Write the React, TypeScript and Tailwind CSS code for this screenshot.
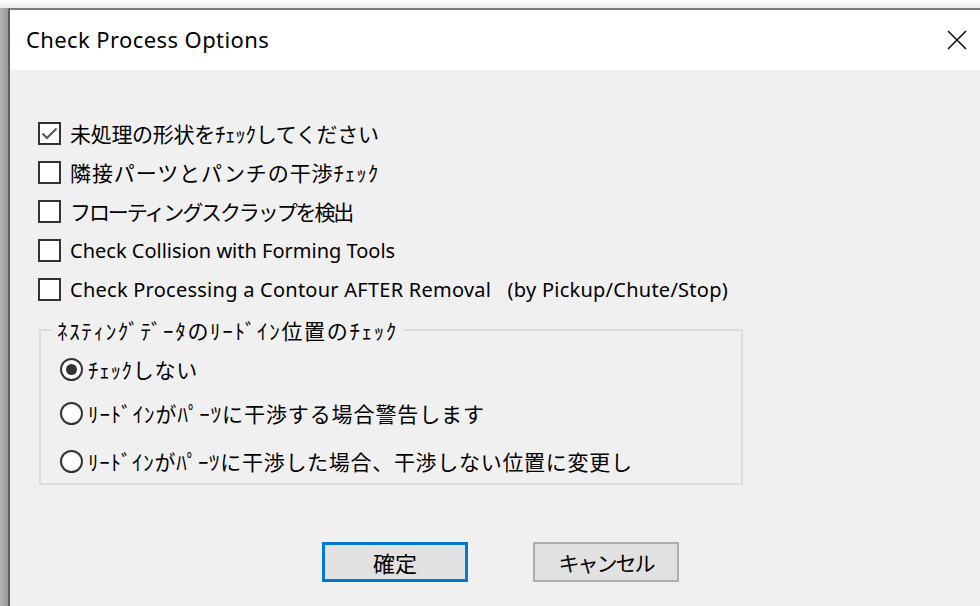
import React, { useState } from 'react';

const JP = '"Noto Sans CJK JP", "Noto Sans", sans-serif';
const EN = '"Noto Sans", "Open Sans", "Noto Sans CJK JP", sans-serif';

type CheckOption = { label: string; jp: boolean; tracking: string };

const checkOptions: CheckOption[] = [
  { label: '未処理の形状をﾁｪｯｸしてください', jp: true, tracking: 'tracking-[-0.3px]' },
  { label: '隣接パーツとパンチの干渉ﾁｪｯｸ', jp: true, tracking: 'tracking-[0.9px]' },
  { label: 'フローティングスクラップを検出', jp: true, tracking: 'tracking-[-2.1px]' },
  { label: 'Check Collision with Forming Tools', jp: false, tracking: 'tracking-[0px]' },
  {
    label: 'Check Processing a Contour AFTER Removal\u00a0\u00a0 (by Pickup/Chute/Stop)',
    jp: false,
    tracking: 'tracking-[0.25px]',
  },
];

const leadInOptions = [
  { label: 'ﾁｪｯｸしない', tracking: 'tracking-[0.7px]', row: 'h-[40px] mt-[7px]' },
  { label: 'ﾘｰﾄﾞｲﾝがﾊﾟｰﾂに干渉する場合警告します', tracking: 'tracking-[0.9px]', row: 'h-[40px] mt-[4px]' },
  {
    label: 'ﾘｰﾄﾞｲﾝがﾊﾟｰﾂに干渉した場合、干渉しない位置に変更し',
    tracking: 'tracking-[0.7px]',
    row: 'h-[40px] mt-[8px]',
  },
];

function CheckBox({ checked }: { checked: boolean }) {
  return (
    <span className="w-[23px] h-[23px] shrink-0 border-2 border-[#333333] bg-white flex items-center justify-center">
      {checked ? (
        <svg width="19" height="19" viewBox="0 0 19 19">
          <polyline points="2.5,9.5 7,14 16.5,4.5" fill="none" stroke="#555555" strokeWidth="2" />
        </svg>
      ) : null}
    </span>
  );
}

function Radio({ checked }: { checked: boolean }) {
  return (
    <span className="w-[23px] h-[23px] shrink-0 rounded-full border-2 border-[#333333] bg-white flex items-center justify-center">
      {checked ? <span className="w-[11px] h-[11px] rounded-full bg-[#333333]" /> : null}
    </span>
  );
}

export default function App() {
  const [checks, setChecks] = useState([true, false, false, false, false]);
  const [leadIn, setLeadIn] = useState(0);

  const toggle = (i: number) => setChecks((prev) => prev.map((v, idx) => (idx === i ? !v : v)));

  return (
    <div className="w-[980px] h-[606px] overflow-hidden bg-white flex flex-col">
      <div className="h-[8px] shrink-0 bg-gradient-to-b from-white to-[#ebebeb]" />
      <div className="flex-1 min-h-0 flex">
        <div className="w-[8px] shrink-0 bg-gradient-to-r from-[#b3b3b3] to-[#979797]" />
        <div className="flex-1 min-w-0 flex flex-col border-l-2 border-t-2 border-l-[#5e5e5e] border-t-[#7a7a7a]">
          {/* title bar */}
          <div className="h-[60px] shrink-0 bg-white flex items-center justify-between pl-[16px] pr-[13px]">
            <span className="text-[22px] tracking-[0.4px] text-black leading-none -mt-[3px]" style={{ fontFamily: EN }}>
              Check Process Options
            </span>
            <button className="w-[20px] h-[20px] flex items-center justify-center">
              <svg width="20" height="20" viewBox="0 0 20 20">
                <path d="M1 1 L19 19 M19 1 L1 19" stroke="#111111" strokeWidth="1.6" fill="none" />
              </svg>
            </button>
          </div>

          {/* dialog body */}
          <div className="flex-1 bg-[#f0f0f0] pl-[28px] pt-[44px]">
            <div className="flex flex-col">
              {checkOptions.map((opt, i) => (
                <label key={i} className="h-[39px] flex items-center gap-[9px] cursor-default" onClick={() => toggle(i)}>
                  <CheckBox checked={checks[i]} />
                  <span
                    className={`text-black whitespace-pre leading-none ${opt.jp ? 'text-[21px]' : 'text-[20px]'} ${opt.tracking}`}
                    style={{ fontFamily: opt.jp ? JP : EN }}
                  >
                    {opt.label}
                  </span>
                </label>
              ))}
            </div>

            <fieldset className="ml-[1px] mt-[9px] w-[704px] border-2 border-[#dcdcdc] pl-[11px] pb-[2px]">
              <legend
                className="px-[5px] h-[24px] leading-[24px] text-[21px] text-black tracking-[1.66px]"
                style={{ fontFamily: JP }}
              >
                ﾈｽﾃｨﾝｸﾞﾃﾞｰﾀのﾘｰﾄﾞｲﾝ位置のﾁｪｯｸ
              </legend>
              {leadInOptions.map((opt, i) => (
                <div
                  key={i}
                  className={`${opt.row} ml-[8px] flex items-center gap-[5px] cursor-default`}
                  onClick={() => setLeadIn(i)}
                >
                  <Radio checked={leadIn === i} />
                  <span className={`text-[21px] text-black leading-none whitespace-pre ${opt.tracking}`} style={{ fontFamily: JP }}>
                    {opt.label}
                  </span>
                </div>
              ))}
            </fieldset>

            <div className="mt-[57px] pl-[284px] flex gap-[65px]">
              <button
                className="w-[146px] h-[40px] border-[3px] border-[#0078d7] bg-[#e1e1e1] text-[22px] text-black leading-none"
                style={{ fontFamily: JP }}
              >
                確定
              </button>
              <button
                className="w-[146px] h-[40px] border-2 border-[#adadad] bg-[#e1e1e1] text-[21px] text-black leading-none tracking-[-2px]"
                style={{ fontFamily: JP }}
              >
                キャンセル
              </button>
            </div>
          </div>
        </div>
      </div>
    </div>
  );
}
